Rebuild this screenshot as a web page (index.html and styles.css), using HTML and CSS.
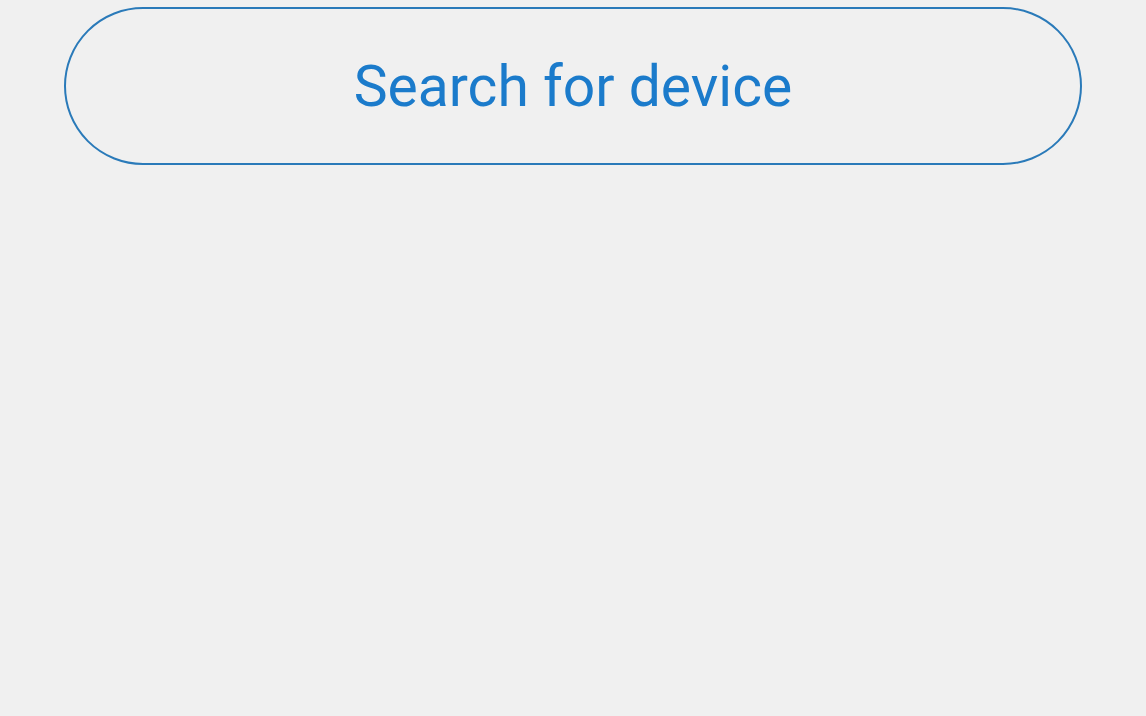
FILE: index.html
```html
<!DOCTYPE html>
<html>
<head>
<meta charset="utf-8">
<link rel="stylesheet" href="styles.css">
</head>
<body>
<div class="page">
  <button class="search-btn">Search for device</button>
</div>
</body>
</html>
```
FILE: styles.css
```css
html, body {
  margin: 0;
  padding: 0;
  background: #f0f0f0;
  width: 1146px;
  height: 716px;
  overflow: hidden;
}
.page {
  padding: 7px 64px 0 64px;
  display: flex;
  flex-direction: column;
}
.search-btn {
  height: 158px;
  width: 1018px;
  border: 2px solid #2a7ab9;
  border-radius: 79px;
  background: transparent;
  color: #1b7bcb;
  font-family: Roboto, "Noto Sans", sans-serif;
  font-size: 57px;
  font-weight: 400;
  padding: 0;
  margin: 0;
  display: flex;
  align-items: center;
  justify-content: center;
}
```
